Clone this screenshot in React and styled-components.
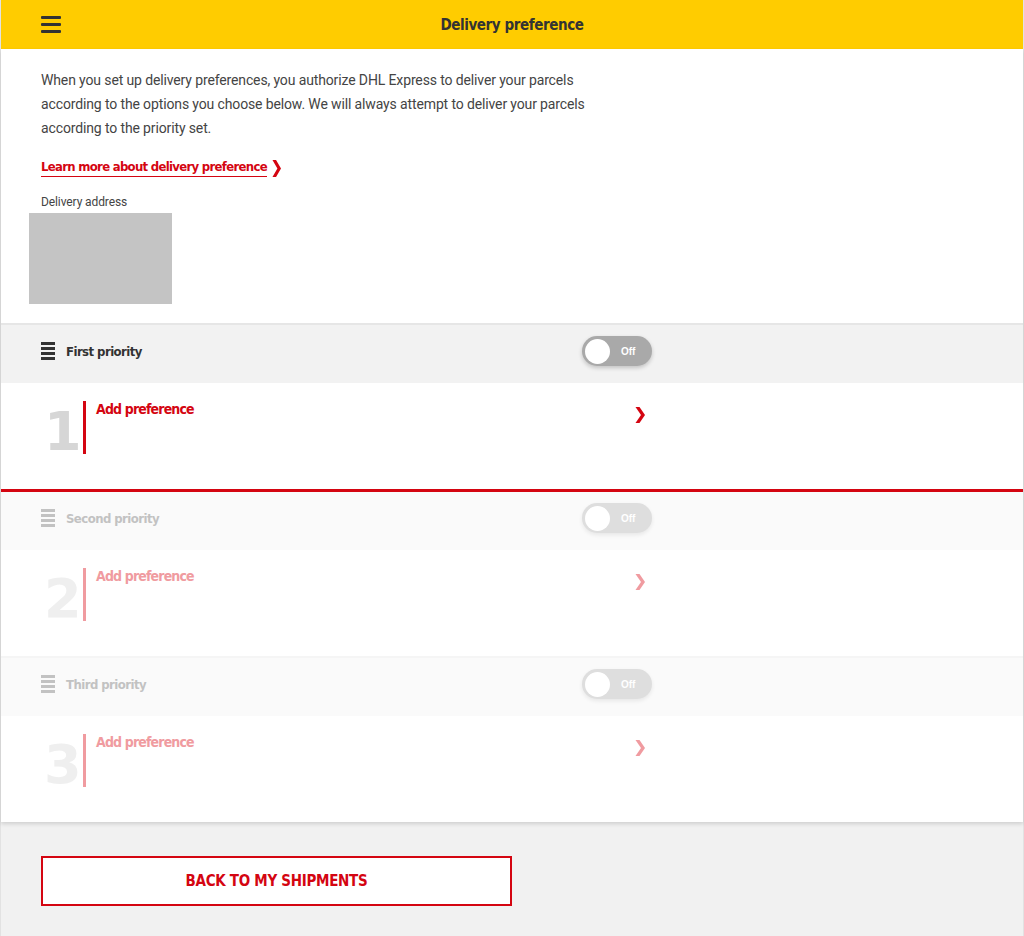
import styled, { createGlobalStyle } from 'styled-components';

const RED = '#d40511';
const NARROW = '"DejaVu Sans Condensed", "Liberation Sans Narrow", sans-serif';

// colours for an active priority and for the greyed-out ones
const active = {
  head: '#f2f2f2',
  text: '#333',
  red: RED,
  digit: '#d6d6d6',
  toggle: '#a9a9a9',
  shadow: 'rgba(0, 0, 0, 0.2)',
};
const muted = {
  head: '#fafafa',
  text: '#c2c2c2',
  red: '#f09ba0',
  digit: '#efefef',
  toggle: '#dedede',
  shadow: 'rgba(0, 0, 0, 0.08)',
};

const GlobalStyle = createGlobalStyle`
  body {
    margin: 0;
    background: #f1f1f1;
    font-family: Roboto, "Liberation Sans", sans-serif;
    color: #333;
  }
`;

const Page = styled.div`
  min-height: 100vh;
  border-left: 1px solid #e2e2e2;
  border-right: 1px solid #e2e2e2;
  background: #f1f1f1;
`;

const TopBar = styled.header`
  height: 49px;
  background: #ffcc00;
  display: grid;
  grid-template-columns: 1fr auto 1fr;
  align-items: center;
  padding: 0 40px;
`;

const Burger = styled.button`
  justify-self: start;
  width: 20px;
  height: 17px;
  padding: 0;
  border: 0;
  background: none;
  display: flex;
  flex-direction: column;
  justify-content: space-between;
  span {
    display: block;
    height: 3px;
    border-radius: 1px;
    background: #333;
  }
`;

const Title = styled.h1`
  margin: 0;
  font-family: ${NARROW};
  font-size: 15px;
  font-weight: bold;
  letter-spacing: -0.4px;
  color: #333;
`;

const Card = styled.main`
  background: #fff;
  box-shadow: 0 2px 4px rgba(0, 0, 0, 0.14);
`;

const Intro = styled.section`
  padding: 19px 40px 19px;
  border-bottom: 2px solid #e6e6e6;
`;

const Lead = styled.p`
  margin: 0;
  max-width: 565px;
  font-size: 14px;
  line-height: 24px;
  letter-spacing: -0.13px;
  color: #444;
`;

const LearnLink = styled.a`
  display: inline-flex;
  align-items: center;
  gap: 5px;
  margin-top: 19px;
  color: ${RED};
  text-decoration: none;
  font-family: ${NARROW};
  font-weight: bold;
  font-size: 13px;
  line-height: 16px;
  letter-spacing: -0.7px;
  span {
    border-bottom: 1px solid ${RED};
    padding-bottom: 1px;
  }
`;

const FieldLabel = styled.div`
  margin-top: 17px;
  font-size: 12px;
  line-height: 16px;
  letter-spacing: -0.1px;
  color: #444;
`;

const AddressBox = styled.div`
  margin: 3px 0 0 -12px;
  width: 143px;
  height: 91px;
  background: #c4c4c4;
`;

const Priority = styled.section`
  border-bottom: ${(p) => p.$bottom};
`;

const PriorityHead = styled.div`
  height: 58px;
  box-sizing: border-box;
  background: ${(p) => p.$c.head};
  padding: 0 40px 6px;
  display: flex;
  align-items: center;
`;

const HeadInner = styled.div`
  width: 611px;
  display: flex;
  align-items: center;
  justify-content: space-between;
`;

const HeadLabel = styled.div`
  display: flex;
  align-items: center;
  gap: 11px;
  font-family: ${NARROW};
  font-weight: bold;
  font-size: 13px;
  letter-spacing: -0.55px;
  color: ${(p) => p.$c.text};
`;

const Grip = styled.div`
  width: 14px;
  height: 18px;
  display: flex;
  flex-direction: column;
  justify-content: space-between;
  span {
    height: 3px;
    background: ${(p) => p.$c.text};
  }
`;

const Toggle = styled.div`
  width: 70px;
  height: 30px;
  border-radius: 15px;
  background: ${(p) => p.$c.toggle};
  box-shadow: 0 2px 4px ${(p) => p.$c.shadow};
  display: flex;
  align-items: center;
  padding: 0 3px;
  box-sizing: border-box;
  gap: 11px;
  &::before {
    content: '';
    width: 25px;
    height: 25px;
    border-radius: 50%;
    background: #fff;
  }
  span {
    color: #fff;
    font-family: "Liberation Sans", sans-serif;
    font-size: 10px;
    font-weight: bold;
  }
`;

const PriorityBody = styled.div`
  padding: 18px 40px 35px 43px;
  display: flex;
  align-items: flex-end;
`;

const Digit = styled.div`
  width: 39px;
  font-family: "DejaVu Sans", sans-serif;
  font-weight: bold;
  font-size: 54px;
  line-height: 44px;
  color: ${(p) => p.$c.digit};
`;

const Choice = styled.div`
  width: 565px;
  height: 53px;
  border-left: 3px solid ${(p) => p.$c.red};
  padding-left: 10px;
  display: flex;
  justify-content: space-between;
  align-items: flex-start;
  box-sizing: border-box;
`;

const ChoiceText = styled.div`
  font-family: ${NARROW};
  font-weight: bold;
  font-size: 14px;
  line-height: 16px;
  letter-spacing: -0.85px;
  color: ${(p) => p.$c.red};
`;

const Chevron = styled.svg`
  margin: ${(p) => p.$margin};
  flex: none;
`;

const Footer = styled.footer`
  padding: 34px 40px 31px;
`;

const BackButton = styled.button`
  width: 471px;
  height: 50px;
  background: #fff;
  border: 2px solid ${RED};
  color: ${RED};
  font-family: ${NARROW};
  font-weight: bold;
  font-size: 15px;
  letter-spacing: -0.3px;
  text-transform: uppercase;
`;

function ChevronIcon({ w = 10, h = 16, margin = '6px 3px 0 0', color = RED }) {
  return (
    <Chevron width={w} height={h} viewBox="0 0 10 16" preserveAspectRatio="none" $margin={margin}>
      <polygon points="0.5,0 4.5,0 10,8 4.5,16 0.5,16 6,8" fill={color} />
    </Chevron>
  );
}

const priorities = [
  { n: '1', label: 'First priority', bottom: `3px solid ${RED}`, c: active },
  { n: '2', label: 'Second priority', bottom: '2px solid #f5f5f5', c: muted },
  { n: '3', label: 'Third priority', bottom: 'none', c: muted },
];

export default function App() {
  return (
    <Page>
      <GlobalStyle />
      <TopBar>
        <Burger aria-label="Menu">
          <span />
          <span />
          <span />
        </Burger>
        <Title>Delivery preference</Title>
      </TopBar>
      <Card>
        <Intro>
          <Lead>
            When you set up delivery preferences, you authorize DHL Express to deliver your parcels
            according to the options you choose below. We will always attempt to deliver your parcels
            according to the priority set.
          </Lead>
          <LearnLink href="#">
            <span>Learn more about delivery preference</span>
            <ChevronIcon w={9} h={17} margin="0" />
          </LearnLink>
          <FieldLabel>Delivery address</FieldLabel>
          <AddressBox />
        </Intro>
        {priorities.map((p) => (
          <Priority key={p.n} $bottom={p.bottom}>
            <PriorityHead $c={p.c}>
              <HeadInner>
                <HeadLabel $c={p.c}>
                  <Grip $c={p.c}>
                    <span />
                    <span />
                    <span />
                    <span />
                  </Grip>
                  {p.label}
                </HeadLabel>
                <Toggle $c={p.c}>
                  <span>Off</span>
                </Toggle>
              </HeadInner>
            </PriorityHead>
            <PriorityBody>
              <Digit $c={p.c}>{p.n}</Digit>
              <Choice $c={p.c}>
                <ChoiceText $c={p.c}>Add preference</ChoiceText>
                <ChevronIcon color={p.c.red} />
              </Choice>
            </PriorityBody>
          </Priority>
        ))}
      </Card>
      <Footer>
        <BackButton>Back to my shipments</BackButton>
      </Footer>
    </Page>
  );
}
